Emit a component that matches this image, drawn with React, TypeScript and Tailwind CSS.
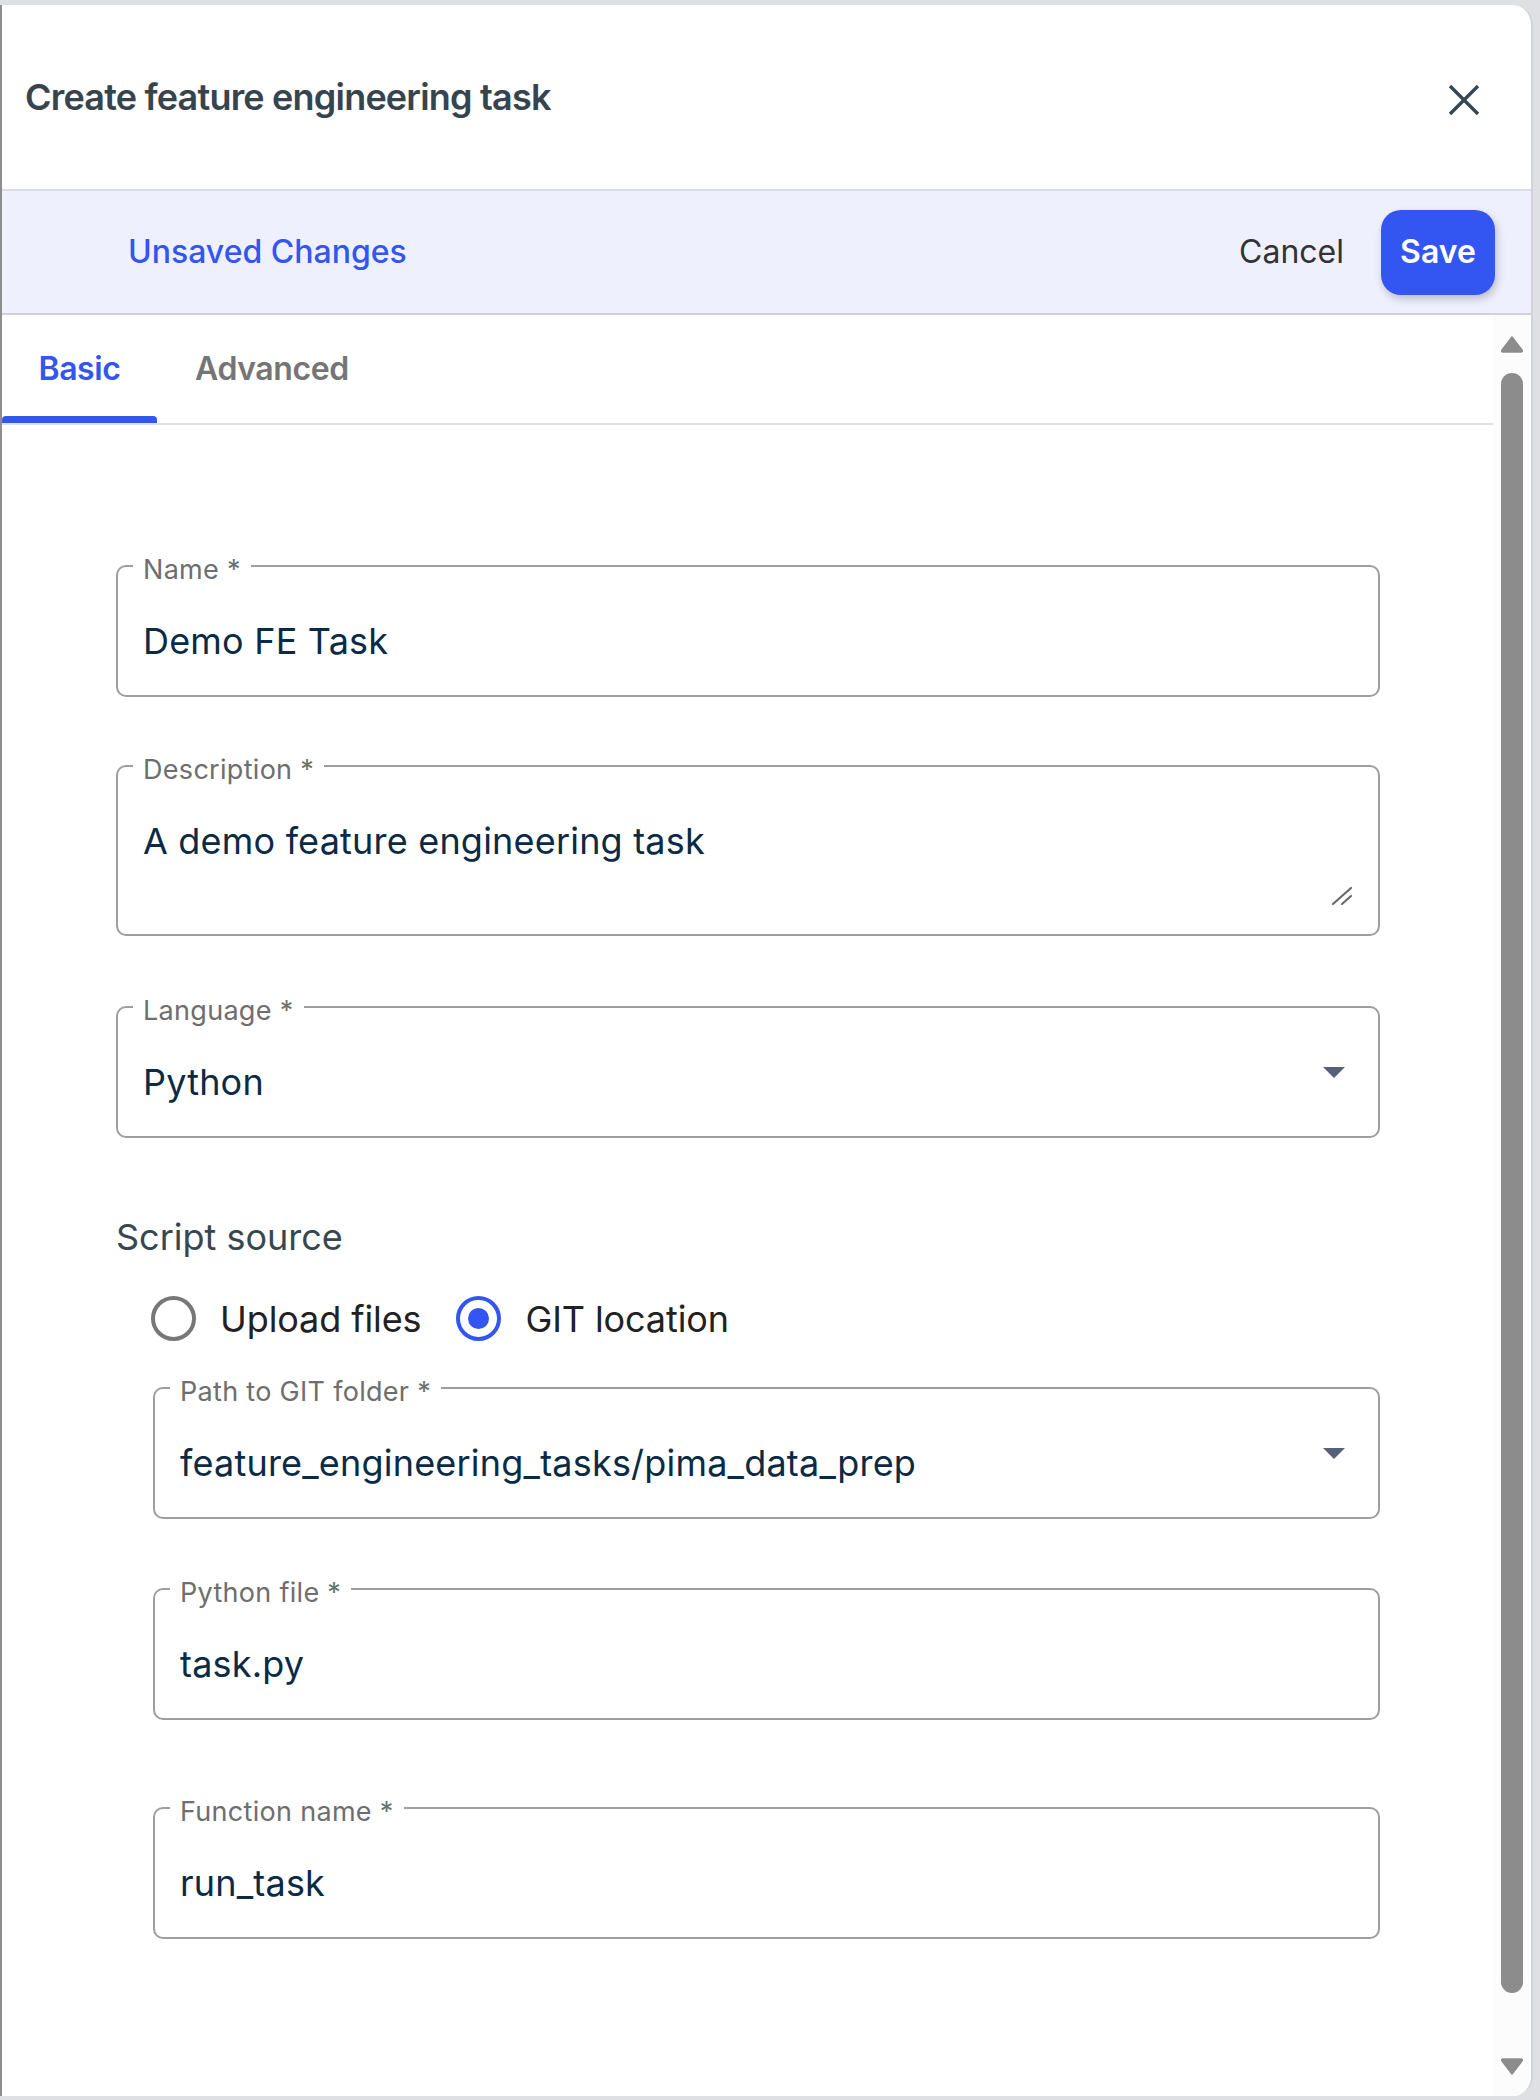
import type { ReactNode } from 'react'

const font = { fontFamily: 'Inter, "Noto Sans", sans-serif' }

interface FieldProps {
  label: string
  value: string
  tall?: boolean
  select?: boolean
  resize?: boolean
  className?: string
}

function Field({ label, value, tall, select, resize, className }: FieldProps) {
  return (
    <div
      className={`relative flex items-start border-2 border-[#9e9e9e] rounded-[10px] pl-[25px] pr-[33px] pt-[52px] ${
        tall ? 'h-[171px]' : 'h-[132px]'
      } ${className ?? ''}`}
    >
      {/* floating label over the outline */}
      <span className="absolute left-[15px] top-[-11px] bg-white px-[10px] text-[27px] leading-[27px] tracking-[0.3px] text-[#6e6e6e]">
        {label}
      </span>
      <span className="flex-1 text-[36px] leading-[44px] tracking-[0.2px] text-[#0b2a45]">{value}</span>
      {select && (
        <svg width="22" height="12" viewBox="0 0 22 12" className="mt-[7px] shrink-0">
          <path d="M0 0 H22 L11 11 Z" fill="#566079" />
        </svg>
      )}
      {resize && (
        <svg width="20" height="18" viewBox="0 0 20 18" className="absolute right-[26px] bottom-[29px]">
          <path d="M1 17 L19 1 M10 17 L19 9" stroke="#6b6b6b" strokeWidth="2.2" strokeLinecap="round" />
        </svg>
      )}
    </div>
  )
}

function Radio({ checked, children }: { checked?: boolean; children: ReactNode }) {
  return (
    <label className="flex items-center gap-[24px]">
      <span
        className={`flex items-center justify-center w-[45px] h-[45px] rounded-full border-4 ${
          checked ? 'border-[#3355f0]' : 'border-[#777777]'
        }`}
      >
        {checked && <span className="w-[21px] h-[21px] rounded-full bg-[#3355f0]" />}
      </span>
      <span className="text-[36px] leading-[44px] tracking-[-0.1px] text-[#212121]">{children}</span>
    </label>
  )
}

export default function App() {
  return (
    <div className="h-[2100px] bg-[#dfe0e4] pt-[5px] pr-[7px] overflow-hidden" style={font}>
      <div className="h-[2091px] flex flex-col bg-white border-l-2 border-l-[#8e8e8e] border-r-2 border-r-[#d2d3d8] rounded-r-[20px] overflow-hidden">
        {/* Header */}
        <div className="h-[186px] shrink-0 flex items-center justify-between pl-[23px] pr-[51px] border-b-2 border-[#dcdde2]">
          <h1 className="text-[36px] font-semibold tracking-[-0.8px] text-[#37444e]">Create feature engineering task</h1>
          <svg width="32" height="32" viewBox="0 0 32 32" className="mt-[6px]">
            <path d="M2 2 L30 30 M30 2 L2 30" stroke="#37474f" strokeWidth="3.4" />
          </svg>
        </div>

        {/* Unsaved changes bar */}
        <div className="h-[124px] shrink-0 flex items-center justify-between bg-[#eef1fd] border-b-2 border-[#cfd1dc] pl-[126px] pr-[36px]">
          <span className="text-[32px] font-medium text-[#3355f0]">Unsaved Changes</span>
          <div className="flex items-center gap-[37px]">
            <button className="text-[32px] text-[#333333]">Cancel</button>
            <button className="w-[114px] h-[85px] rounded-[20px] bg-[#3355f2] text-white text-[32px] font-semibold shadow-[2px_4px_8px_rgba(0,0,0,0.22)]">
              Save
            </button>
          </div>
        </div>

        {/* Scrollable body */}
        <div className="flex-1 flex min-h-0">
          <div className="flex-1 flex flex-col">
            {/* Tabs */}
            <div className="h-[110px] shrink-0 flex border-b-2 border-[#e0e0e0]">
              <div className="relative w-[155px] flex items-center justify-center text-[32px] font-semibold tracking-[-0.4px] text-[#3355f0]">
                Basic
                <span className="absolute left-0 right-0 bottom-0 h-[7px] rounded-t-[4px] bg-[#3355f0]" />
              </div>
              <div className="w-[190px] flex items-center pl-[38px] text-[32px] font-semibold tracking-[-0.4px] text-[#757575]">
                Advanced
              </div>
            </div>

            {/* Form */}
            <div className="flex flex-col pl-[114px] pr-[113px] pt-[140px]">
              <Field label="Name *" value="Demo FE Task" />
              <Field label="Description *" value="A demo feature engineering task" tall resize className="mt-[68px]" />
              <Field label="Language *" value="Python" select className="mt-[70px]" />

              <div className="mt-[77px] text-[36px] leading-[44px] text-[#37474f]">Script source</div>
              <div className="mt-[37px] ml-[35px] flex items-center gap-[35px]">
                <Radio>Upload files</Radio>
                <Radio checked>GIT location</Radio>
              </div>

              <div className="ml-[37px] flex flex-col">
                <Field
                  label="Path to GIT folder *"
                  value="feature_engineering_tasks/pima_data_prep"
                  select
                  className="mt-[46px]"
                />
                <Field label="Python file *" value="task.py" className="mt-[69px]" />
                <Field label="Function name *" value="run_task" className="mt-[87px]" />
              </div>
            </div>
          </div>

          {/* Scrollbar */}
          <div className="w-[38px] shrink-0 flex flex-col items-center bg-[#fcfcfc] pt-[20px]">
            <svg width="24" height="18" viewBox="0 0 24 18">
              <path d="M12 2 L22 15 Q23 17 21 17 H3 Q1 17 2 15 Z" fill="#8c8c8c" stroke="#8c8c8c" strokeLinejoin="round" strokeWidth="1.5" />
            </svg>
            <div className="mt-[20px] w-[22px] h-[1620px] rounded-full bg-[#8c8c8c]" />
            <svg width="24" height="18" viewBox="0 0 24 18" className="mt-[65px]">
              <path d="M12 16 L22 3 Q23 1 21 1 H3 Q1 1 2 3 Z" fill="#8c8c8c" stroke="#8c8c8c" strokeLinejoin="round" strokeWidth="1.5" />
            </svg>
          </div>
        </div>
      </div>
    </div>
  )
}
